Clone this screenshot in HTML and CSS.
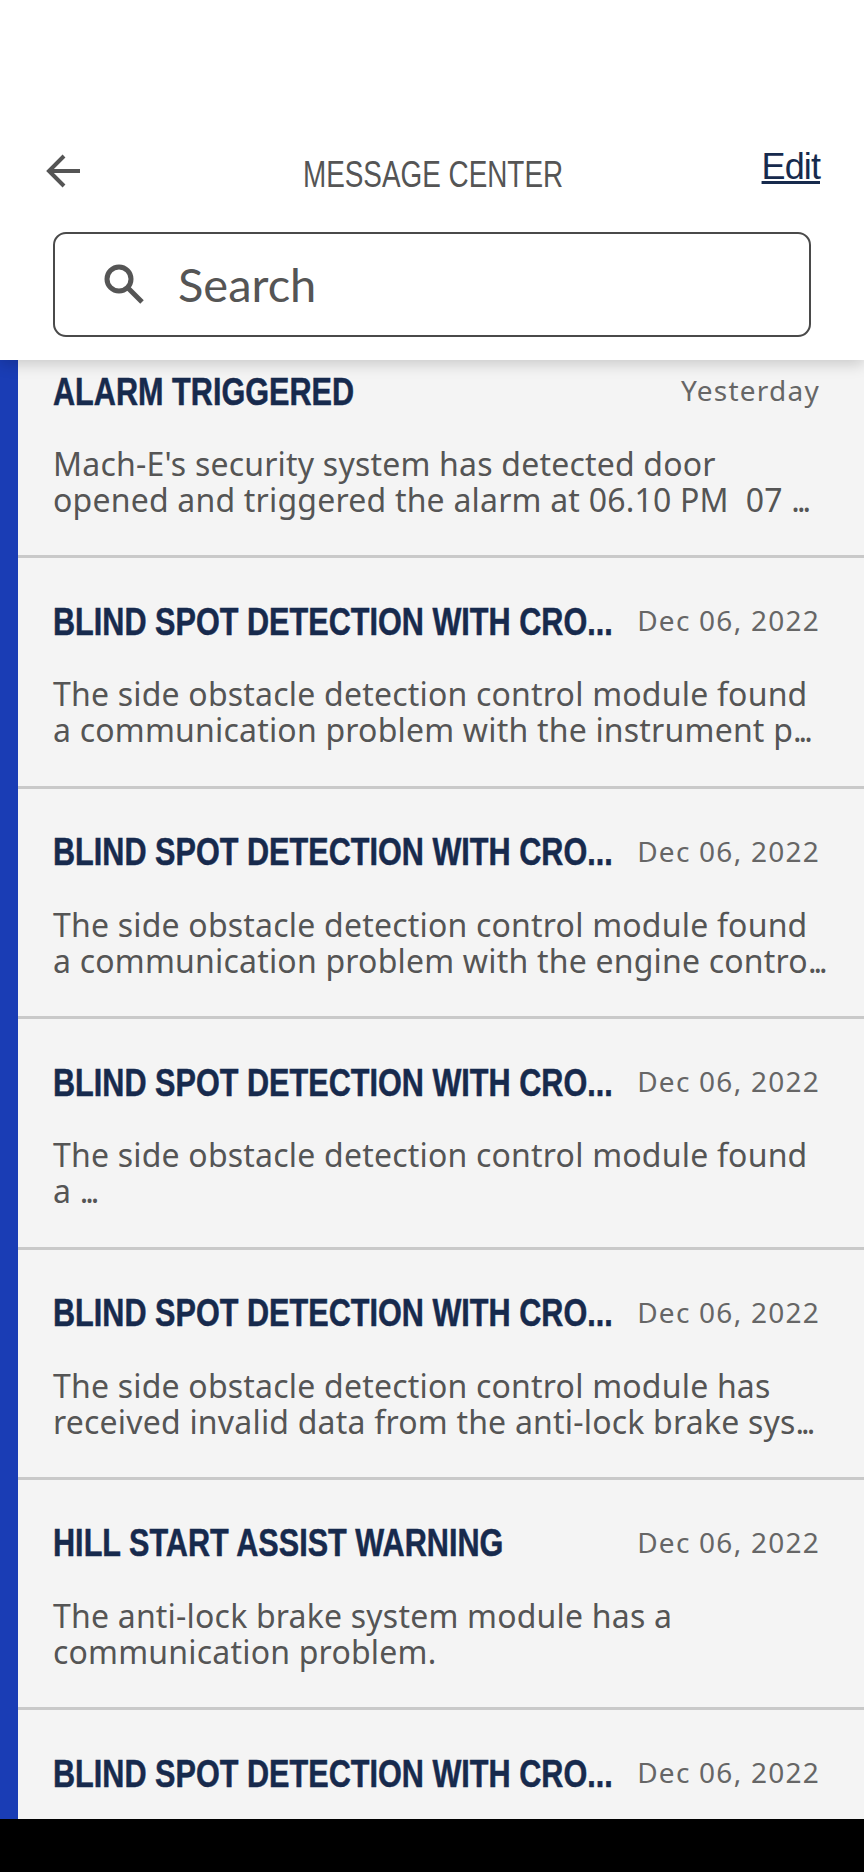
FILE: index.html
```html
<!DOCTYPE html>
<html lang="en">
<head>
    <meta charset="UTF-8">
    <meta name="viewport" content="width=device-width, initial-scale=1.0">
    <title>Message Center</title>
    <link rel="stylesheet" href="styles.css">
</head>
<body>
    <div class="screen">
        <header class="header">
            <div class="topbar">
                <svg class="back" viewBox="0 0 34 36" width="34" height="36">
                    <path d="M18 3 L3 18 L18 33 M3 18 H34" fill="none" stroke="#555" stroke-width="4"/>
                </svg>
                <h1>MESSAGE CENTER</h1>
                <a class="edit" href="#">Edit</a>
            </div>
            <div class="search">
                <svg class="search-icon" viewBox="0 0 40 40" width="40" height="40">
                    <circle cx="15" cy="15" r="12" fill="none" stroke="#555" stroke-width="5"/>
                    <path d="M24 24 L38 38" fill="none" stroke="#555" stroke-width="5"/>
                </svg>
                <span class="search-text">Search</span>
            </div>
        </header>

        <main class="list">
            <div class="message">
                <div class="message-head">
                    <span class="message-title">ALARM TRIGGERED</span>
                    <span class="message-date">Yesterday</span>
                </div>
                <p class="message-body">Mach-E's security system has detected door<br>opened and triggered the alarm at 06.10 PM&nbsp; 07 <span class="dots">...</span></p>
            </div>
            <div class="message">
                <div class="message-head">
                    <span class="message-title">BLIND SPOT DETECTION WITH CRO...</span>
                    <span class="message-date">Dec 06, 2022</span>
                </div>
                <p class="message-body">The side obstacle detection control module found<br>a communication problem with the instrument p<span class="dots">...</span></p>
            </div>
            <div class="message">
                <div class="message-head">
                    <span class="message-title">BLIND SPOT DETECTION WITH CRO...</span>
                    <span class="message-date">Dec 06, 2022</span>
                </div>
                <p class="message-body">The side obstacle detection control module found<br>a communication problem with the engine contro<span class="dots">...</span></p>
            </div>
            <div class="message">
                <div class="message-head">
                    <span class="message-title">BLIND SPOT DETECTION WITH CRO...</span>
                    <span class="message-date">Dec 06, 2022</span>
                </div>
                <p class="message-body">The side obstacle detection control module found<br>a <span class="dots">...</span></p>
            </div>
            <div class="message">
                <div class="message-head">
                    <span class="message-title">BLIND SPOT DETECTION WITH CRO...</span>
                    <span class="message-date">Dec 06, 2022</span>
                </div>
                <p class="message-body">The side obstacle detection control module has<br>received invalid data from the anti-lock brake sys<span class="dots">...</span></p>
            </div>
            <div class="message">
                <div class="message-head">
                    <span class="message-title">HILL START ASSIST WARNING</span>
                    <span class="message-date">Dec 06, 2022</span>
                </div>
                <p class="message-body">The anti-lock brake system module has a<br>communication problem.</p>
            </div>
            <div class="message">
                <div class="message-head">
                    <span class="message-title">BLIND SPOT DETECTION WITH CRO...</span>
                    <span class="message-date">Dec 06, 2022</span>
                </div>
            </div>
        </main>

        <div class="navbar"></div>
    </div>
</body>
</html>
```

FILE: styles.css
```css
* {
    margin: 0;
    padding: 0;
    box-sizing: border-box;
}

body {
    background-color: #000;
    font-family: "Noto Sans", sans-serif;
    overflow: hidden;
}

.screen {
    display: flex;
    flex-direction: column;
    height: 1872px;
}

/* Header */
.header {
    flex: none;
    height: 360px;
    padding: 153px 44px 0 46px;
    background-color: #fff;
    box-shadow: 0 4px 14px rgba(0, 0, 0, 0.18);
    position: relative;
    z-index: 1;
}

.topbar {
    display: grid;
    grid-template-columns: 1fr auto 1fr;
    align-items: start;
    height: 79px;
}

.topbar h1 {
    font-family: "Liberation Sans", sans-serif;
    font-size: 36px;
    font-weight: 400;
    line-height: 40px;
    color: #555;
    margin-top: 2px;
    white-space: nowrap;
    transform: scaleX(0.774);
}

.edit {
    justify-self: end;
    margin-top: -2px;
    font-family: "Liberation Sans", sans-serif;
    font-size: 36px;
    line-height: 32px;
    letter-spacing: -0.9px;
    color: #172a4d;
}

.search {
    display: flex;
    align-items: center;
    gap: 34px;
    width: 758px;
    height: 105px;
    margin-left: 7px;
    padding-left: 49px;
    padding-bottom: 2px;
    border: 2px solid #4a4a4a;
    border-radius: 13px;
}

.search-text {
    font-family: "Lato", sans-serif;
    font-size: 47px;
    color: #555;
}

/* Message list */
.list {
    flex: 1;
    overflow: hidden;
    background-color: #f4f4f4;
    border-left: 18px solid #1a3db5;
}

.message {
    height: 230.4px;
    padding: 0 44px 0 35px;
    border-bottom: 3px solid #c9c9c9;
}

.message:first-child {
    margin-top: -32px;
}

.message-head {
    display: flex;
    justify-content: space-between;
    align-items: center;
    padding-top: 42px;
    height: 86px;
}

/* the original face is a condensed bold, squeezed from Liberation Sans */
.message-title {
    flex: 1;
    min-width: 0;
    font-family: "Liberation Sans", sans-serif;
    font-size: 38px;
    font-weight: 700;
    -webkit-text-stroke: 0.5px #172a4d;
    color: #172a4d;
    white-space: nowrap;
    transform: scaleX(0.806);
    transform-origin: left center;
}

.message-date {
    flex: none;
    margin-bottom: 4px;
    font-size: 28px;
    letter-spacing: 1.25px;
    color: #666;
    white-space: nowrap;
}

.message-body {
    margin-top: 32px;
    font-size: 32px;
    line-height: 36px;
    letter-spacing: 0.2px;
    color: #555;
    white-space: nowrap;
}

.dots {
    letter-spacing: -3px;
}

.navbar {
    flex: none;
    height: 53px;
    background-color: #000;
}
```
